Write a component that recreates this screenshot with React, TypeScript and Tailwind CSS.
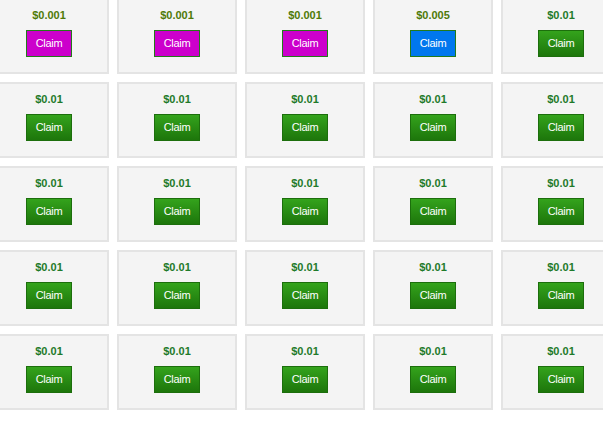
import React from "react";

type Item = { price: string; kind: "green" | "magenta" | "blue" };

const rows: Item[][] = [
  [
    { price: "$0.001", kind: "magenta" },
    { price: "$0.001", kind: "magenta" },
    { price: "$0.001", kind: "magenta" },
    { price: "$0.005", kind: "blue" },
    { price: "$0.01", kind: "green" },
  ],
  ...Array.from({ length: 4 }, () =>
    Array.from({ length: 5 }, () => ({ price: "$0.01", kind: "green" as const }))
  ),
];

function Card({ item }: { item: Item }) {
  const btn =
    item.kind === "green"
      ? "bg-gradient-to-b from-[#34a31c] to-[#1d760b] border-[#1c6e0c]"
      : item.kind === "magenta"
      ? "bg-[#cc00cc] border-[#237a1a]"
      : "bg-[#0077ee] border-[#237a1a]";
  const priceColor = item.kind === "green" ? "text-[#1f7a2a]" : "text-[#4f7a08]";
  return (
    <div className="w-[120px] h-[76px] shrink-0 bg-[#f4f4f4] border-2 border-[#e4e4e4] flex flex-col items-center pt-[9px]">
      <div className={`text-[11px] leading-[13px] font-bold ${priceColor}`}>{item.price}</div>
      <button
        className={`mt-[8px] w-[46px] h-[27px] border text-white text-[11px] leading-[13px] tracking-[-0.3px] flex items-center justify-center ${btn}`}
      >
        Claim
      </button>
    </div>
  );
}

export default function App() {
  return (
    <div
      className="w-[603px] h-[429px] overflow-hidden bg-white"
      style={{ fontFamily: '"Liberation Sans", Arial, sans-serif' }}
    >
      <div className="ml-[-11px] mt-[-2px] flex flex-col gap-[8px]">
        {rows.map((r, i) => (
          <div key={i} className="flex gap-[8px]">
            {r.map((it, j) => (
              <Card key={j} item={it} />
            ))}
          </div>
        ))}
      </div>
    </div>
  );
}
